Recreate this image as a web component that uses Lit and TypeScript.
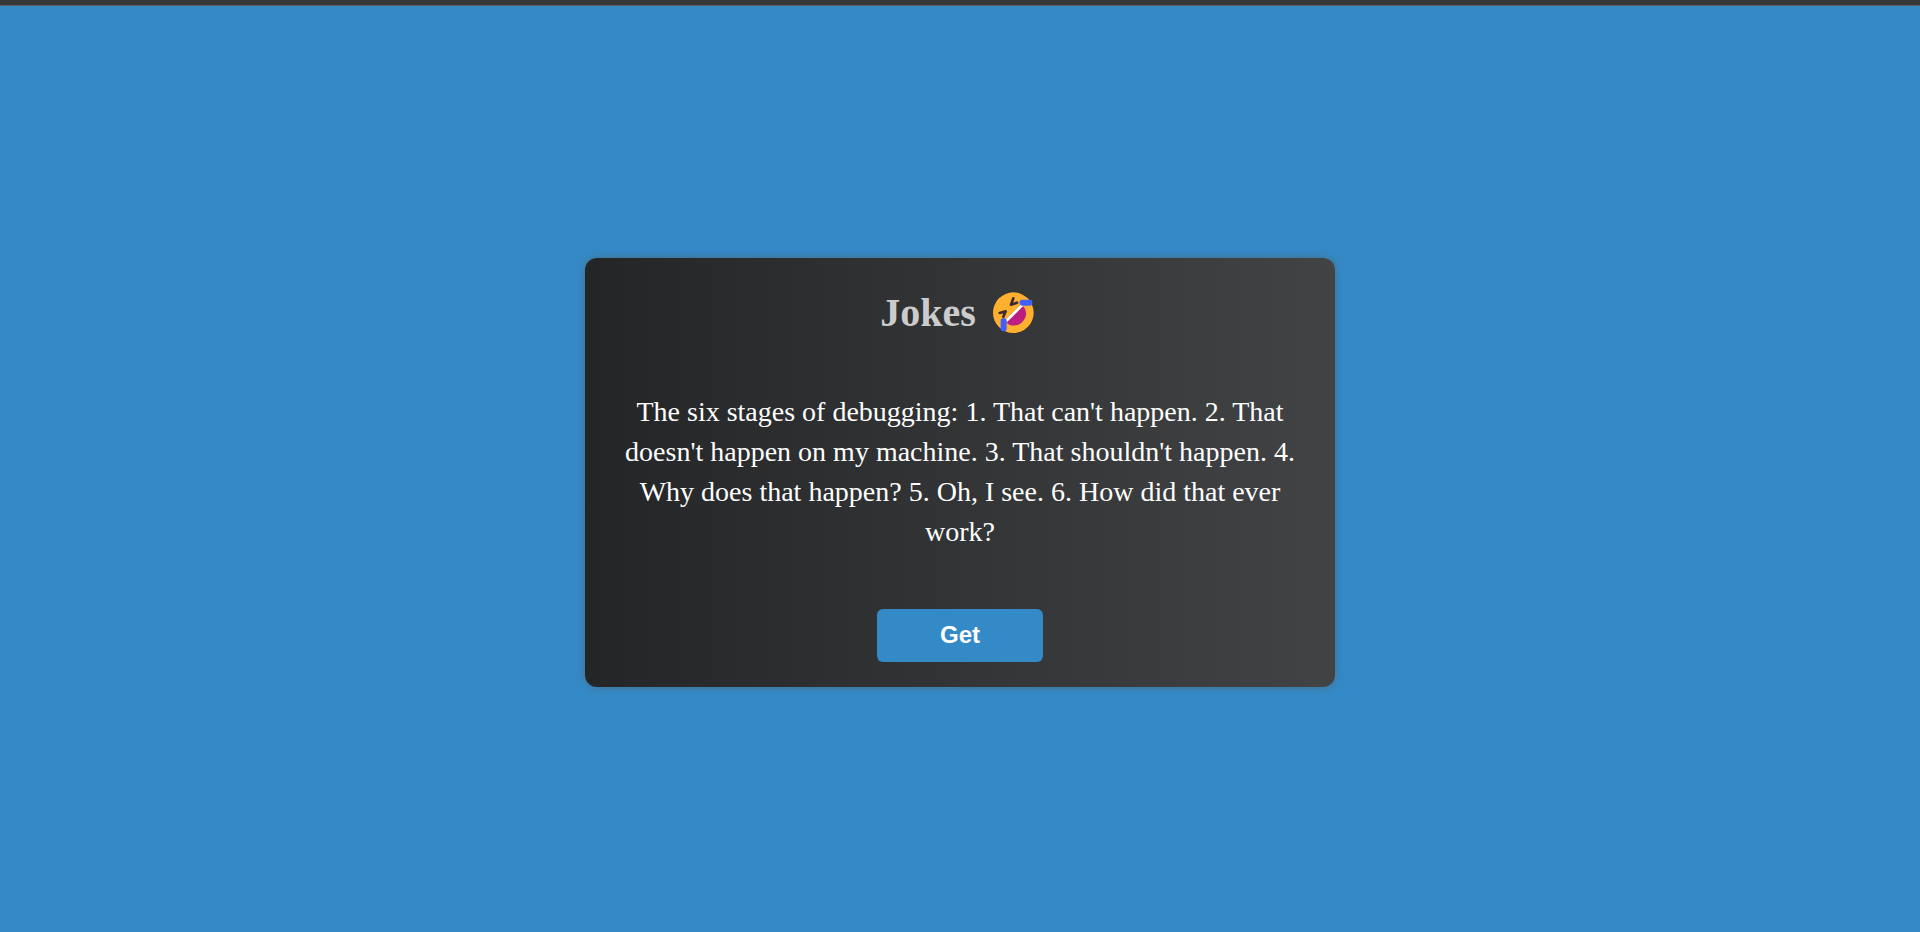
import { LitElement, html, css } from "lit";
import { customElement, property } from "lit/decorators.js";

@customElement("laughing-face")
class LaughingFace extends LitElement {
  static styles = css`
    :host {
      display: block;
      width: 54px;
      height: 42px;
    }
    svg {
      display: block;
      width: 100%;
      height: 100%;
    }
  `;

  render() {
    return html`
      <svg viewBox="16 34 162 126" role="img" aria-label="Rolling on the floor laughing">
        <circle cx="98" cy="96" r="61" fill="#ffb02e" />
        <path d="M122 72 L74 120 C84 139 110 139 125 124 C140 109 141 86 122 72 Z" fill="#bb1d80" />
        <path d="M124 74 L78 120" stroke="#ffffff" stroke-width="8" stroke-linecap="round" />
        <path
          d="M98 53 L91 72 L109 66 M57 97 L75 92 L68 108"
          fill="none"
          stroke="#402a32"
          stroke-width="8"
          stroke-linecap="round"
          stroke-linejoin="round"
        />
        <rect x="117" y="57" width="38" height="18" rx="7" fill="#3f5fff" />
        <rect x="60" y="113" width="18" height="39" rx="7" fill="#3f5fff" />
      </svg>
    `;
  }
}

@customElement("app-root")
class AppRoot extends LitElement {
  @property() joke =
    "The six stages of debugging: 1. That can't happen. 2. That doesn't happen on my machine. 3. That shouldn't happen. 4. Why does that happen? 5. Oh, I see. 6. How did that ever work?";

  static styles = css`
    :host {
      display: flex;
      flex-direction: column;
      min-height: 100vh;
      box-sizing: border-box;
      border-top: 5px solid #36373a;
      background: #348ac7;
      font-family: "Liberation Serif", "Times New Roman", serif;
    }
    .page {
      flex: 1;
      display: flex;
      align-items: center;
      justify-content: center;
      padding: 27px 20px 20px;
      border-top: 1px solid #5c6166;
    }
    .card {
      box-sizing: border-box;
      width: 100%;
      max-width: 750px;
      display: flex;
      flex-direction: column;
      align-items: center;
      padding: 32px 36px 25px;
      border-radius: 12px;
      background: linear-gradient(to right, #232526, #414345);
      box-shadow: 0 0 8px rgba(90, 90, 90, 0.6);
      text-align: center;
    }
    .title {
      display: flex;
      align-items: center;
      gap: 10px;
      margin: 0;
      color: #cccccc;
      font-size: 40px;
      line-height: 46px;
    }
    .joke {
      margin: 56px 0 57px;
      color: #ffffff;
      font-size: 28px;
      line-height: 40px;
    }
    .get {
      padding: 12px 63px 13px;
      border: 0;
      border-radius: 6px;
      background: #348ac7;
      color: #ffffff;
      font: bold 24px/28px "Liberation Sans", Arial, sans-serif;
      cursor: pointer;
    }
  `;

  render() {
    return html`
      <main class="page">
        <section class="card">
          <h1 class="title">Jokes <laughing-face></laughing-face></h1>
          <p class="joke">${this.joke}</p>
          <button class="get" type="button">Get</button>
        </section>
      </main>
    `;
  }
}
